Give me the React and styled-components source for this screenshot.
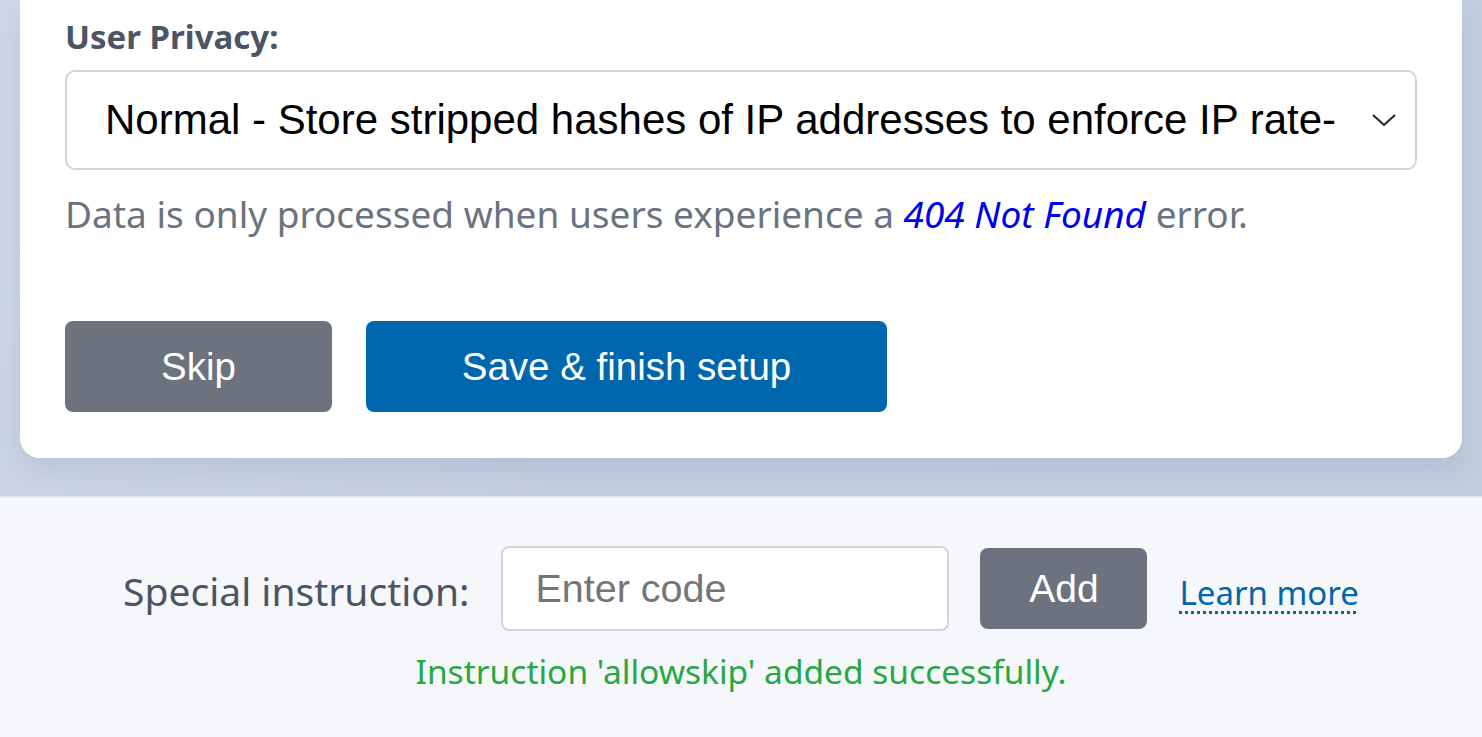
import React, { useState } from 'react';
import styled, { createGlobalStyle } from 'styled-components';

const GlobalStyle = createGlobalStyle`
  html, body {
    margin: 0;
    padding: 0;
    background: #f6f7fa;
  }
  * {
    box-sizing: border-box;
  }
`;

const Page = styled.div`
  min-height: 737px;
  display: flex;
  flex-direction: column;
  font-family: "Noto Sans", "Open Sans", sans-serif;
`;

const Stage = styled.div`
  background: linear-gradient(120deg, #cfd8e6 0%, #c4cee0 50%, #c2cddf 100%);
  padding: 0 20px 38px 20px;
  border-bottom: 2px solid #e3e7ee;
`;

const Card = styled.div`
  background: #ffffff;
  border-radius: 0 0 20px 20px;
  padding: 12px 45px 46px 45px;
  box-shadow: 0 12px 28px rgba(60, 80, 120, 0.12);
`;

const FieldLabel = styled.div`
  font-size: 33px;
  font-weight: 700;
  color: #4b5563;
  line-height: 50px;
  margin-bottom: 8px;
`;

const SelectBox = styled.div`
  position: relative;
  height: 100px;
  border: 2px solid #d1d5db;
  border-radius: 10px;
  display: flex;
  align-items: center;
  padding: 0 80px 0 38px;
  font-family: "Liberation Sans", Arial, sans-serif;
  font-size: 42px;
  color: #000;
  white-space: nowrap;
  overflow: hidden;
`;

const Chevron = styled.svg`
  position: absolute;
  right: 18px;
  top: 50%;
  margin-top: -8px;
  width: 26px;
  height: 16px;
`;

const Helper = styled.p`
  margin: 20px 0 0 0;
  font-size: 37px;
  line-height: 48px;
  color: #6b7280;
`;

const InlineLink = styled.a`
  color: #0000ee;
  font-style: italic;
  text-decoration: none;
`;

const Actions = styled.div`
  display: flex;
  gap: 34px;
  margin-top: 83px;
`;

const Button = styled.button`
  height: 91px;
  width: ${p => p.$width}px;
  border: none;
  border-radius: 8px;
  background: ${p => (p.$primary ? '#0066ae' : '#6c737e')};
  color: #fff;
  font-family: "Liberation Sans", Arial, sans-serif;
  font-size: 38.5px;
  cursor: pointer;
`;

const Footer = styled.div`
  flex: 1;
  background: #f6f7fa;
  padding-top: 48px;
  display: flex;
  flex-direction: column;
  align-items: center;
`;

const CodeRow = styled.div`
  display: flex;
  align-items: center;
`;

const RowLabel = styled.span`
  font-size: 39px;
  color: #4b5563;
  margin-right: 32px;
  margin-top: 4px;
`;

const CodeInput = styled.input`
  width: 448px;
  height: 85px;
  border: 2px solid #d1d5db;
  border-radius: 8px;
  padding: 0 32px;
  font-family: "Liberation Sans", Arial, sans-serif;
  font-size: 39.5px;
  background: #fff;
  outline: none;

  &::placeholder {
    color: #757575;
  }
`;

const AddButton = styled.button`
  width: 167px;
  height: 81px;
  margin-left: 31px;
  border: none;
  border-radius: 8px;
  background: #6c737e;
  color: #fff;
  font-family: "Liberation Sans", Arial, sans-serif;
  font-size: 39px;
  cursor: pointer;
`;

const LearnMore = styled.a`
  margin-left: 32px;
  margin-top: 8px;
  font-size: 33px;
  color: #0066ae;
  text-decoration: underline dotted;
  text-underline-offset: 6px;
  text-decoration-thickness: 3px;
`;

const Success = styled.div`
  margin-top: 17px;
  font-size: 33.5px;
  color: #28a745;
`;

const App = () => {
  const [code, setCode] = useState('');

  return (
    <Page>
      <GlobalStyle />
      <Stage>
        <Card>
          <FieldLabel>User Privacy:</FieldLabel>
          <SelectBox>
            Normal - Store stripped hashes of IP addresses to enforce IP rate-
            <Chevron viewBox="0 0 26 16" fill="none">
              <path d="M2 3 L13 13 L24 3" stroke="#222" strokeWidth="2" />
            </Chevron>
          </SelectBox>
          <Helper>
            Data is only processed when users experience a <InlineLink href="#">404 Not Found</InlineLink> error.
          </Helper>
          <Actions>
            <Button $width={267}>Skip</Button>
            <Button $width={521} $primary>Save &amp; finish setup</Button>
          </Actions>
        </Card>
      </Stage>
      <Footer>
        <CodeRow>
          <RowLabel>Special instruction:</RowLabel>
          <CodeInput
            placeholder="Enter code"
            value={code}
            onChange={e => setCode(e.target.value)}
          />
          <AddButton>Add</AddButton>
          <LearnMore href="#">Learn more</LearnMore>
        </CodeRow>
        <Success>Instruction 'allowskip' added successfully.</Success>
      </Footer>
    </Page>
  );
};

export default App;
